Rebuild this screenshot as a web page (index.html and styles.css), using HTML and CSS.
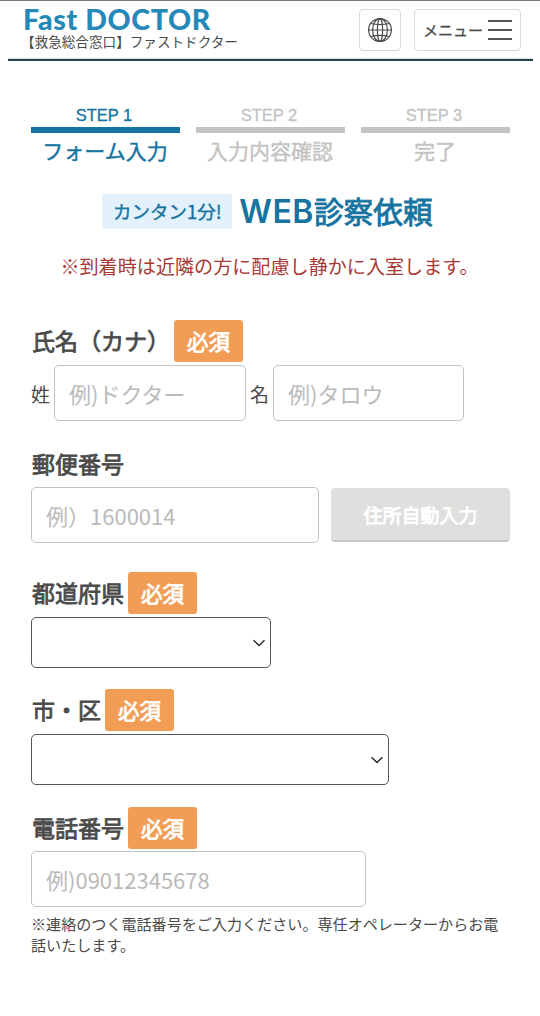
FILE: index.html
```
<!DOCTYPE html>
<html lang="ja">
<head>
    <meta charset="UTF-8">
    <title>WEB診察依頼 | ファストドクター</title>
    <link rel="stylesheet" href="styles.css">
</head>
<body>
    <header class="header">
        <div class="brand">
            <div class="logo">Fast DOCTOR</div>
            <div class="tagline">【救急総合窓口】ファストドクター</div>
        </div>
        <button class="lang-button" aria-label="Language">
            <svg width="26" height="26" viewBox="0 0 26 26" fill="none" stroke="#4a4a4a" stroke-width="1.2">
                <circle cx="13" cy="13" r="11.4"/>
                <ellipse cx="13" cy="13" rx="7.4" ry="11.4"/>
                <ellipse cx="13" cy="13" rx="2.6" ry="11.4"/>
                <path d="M1.7 13h22.6M4 6.5q9 2.2 18 0M4 19.5q9-2.2 18 0"/>
            </svg>
        </button>
        <button class="menu-button">
            <span>メニュー</span>
            <span class="menu-lines"><i></i><i></i><i></i></span>
        </button>
    </header>
    <div class="header-rule"></div>

    <main class="container">
        <ol class="steps">
            <li class="step active"><span class="step-no">STEP 1</span><span class="step-name">フォーム入力</span></li>
            <li class="step"><span class="step-no">STEP 2</span><span class="step-name">入力内容確認</span></li>
            <li class="step"><span class="step-no">STEP 3</span><span class="step-name">完了</span></li>
        </ol>

        <h1 class="title">
            <span class="title-badge">カンタン1分!</span>
            <span class="title-text"><span class="title-latin">WEB</span>診察依頼</span>
        </h1>
        <p class="notice">※到着時は近隣の方に配慮し静かに入室します。</p>

        <form>
            <div class="field name-field">
                <div class="label">氏名（カナ）<span class="required">必須</span></div>
                <div class="row">
                    <label class="name-label" for="sei">姓</label>
                    <input class="input name-input" id="sei" type="text" placeholder="例)ドクター">
                    <label class="name-label" for="mei">名</label>
                    <input class="input name-input" id="mei" type="text" placeholder="例)タロウ">
                </div>
            </div>

            <div class="field zip-field">
                <div class="label">郵便番号</div>
                <div class="row">
                    <input class="input zip-input" type="text" placeholder="例）1600014">
                    <button class="zip-button" type="button">住所自動入力</button>
                </div>
            </div>

            <div class="field pref-field">
                <div class="label">都道府県<span class="required">必須</span></div>
                <div class="select pref-select">
                    <svg width="14" height="8" viewBox="0 0 14 8" fill="none" stroke="#222" stroke-width="1.3"><path d="M1.5 1.2L7 6.5l5.5-5.3"/></svg>
                </div>
            </div>

            <div class="field city-field">
                <div class="label">市・区<span class="required">必須</span></div>
                <div class="select city-select">
                    <svg width="14" height="8" viewBox="0 0 14 8" fill="none" stroke="#222" stroke-width="1.3"><path d="M1.5 1.2L7 6.5l5.5-5.3"/></svg>
                </div>
            </div>

            <div class="field tel-field">
                <div class="label">電話番号<span class="required">必須</span></div>
                <input class="input tel-input" type="tel" placeholder="例)09012345678">
                <p class="help">※連絡のつく電話番号をご入力ください。専任オペレーターからお電話いたします。</p>
            </div>
        </form>
    </main>
</body>
</html>
```

FILE: styles.css
```
:root {
    --blue: #1674a1;
    --logo-blue: #2489b8;
    --gray: #c3c3c3;
    --text: #4a4a4a;
    --orange: #f29d55;
}

* {
    box-sizing: border-box;
}

body {
    margin: 0;
    background: #fff;
    color: var(--text);
    font-family: "Noto Sans CJK JP", sans-serif;
    overflow: hidden;
}

button, input {
    font-family: inherit;
    color: inherit;
    margin: 0;
    padding: 0;
}

/* header */
.header {
    display: flex;
    align-items: flex-start;
    height: 58px;
    padding: 8px 19px 0 23px;
    border-top: 1px solid #77777b;
}

.brand {
    flex: 1;
}

.logo {
    height: 21px;
    font-family: Lato, sans-serif;
    font-weight: 900;
    font-size: 28.5px;
    line-height: 21px;
    letter-spacing: 0.65px;
    color: var(--logo-blue);
    white-space: nowrap;
}

.tagline {
    margin-top: 1px;
    margin-left: -2px;
    font-size: 13.6px;
    line-height: 20px;
    white-space: nowrap;
}

.lang-button, .menu-button {
    display: flex;
    align-items: center;
    justify-content: center;
    height: 42px;
    background: #fff;
    border: 1px solid #d9d9d9;
    border-radius: 4px;
}

.lang-button {
    width: 42px;
    margin-right: 13px;
}

.menu-button {
    width: 107px;
    gap: 5px;
    padding-bottom: 1px;
    font-size: 15px;
    -webkit-text-stroke: 0.3px currentColor;
}

.menu-lines {
    display: flex;
    flex-direction: column;
    gap: 7px;
    width: 24px;
    padding-top: 1px;
}

.menu-lines i {
    height: 2px;
    background: #555;
}

.header-rule {
    height: 3px;
    margin: 0 7px 0 8px;
    border-top: 1px solid #cfe3e3;
    border-bottom: 2px solid #2b4148;
}

.container {
    padding: 43px 30px 0 31px;
}

/* steps */
.steps {
    display: grid;
    grid-template-columns: repeat(3, 1fr);
    gap: 16px;
    margin: 0;
    padding: 0;
    list-style: none;
    text-align: center;
    color: var(--gray);
}

.step.active {
    color: var(--blue);
}

.step-no {
    display: block;
    height: 29px;
    padding: 1px 3px 0 0;
    border-bottom: 6px solid currentColor;
    font-family: "Liberation Sans", sans-serif;
    font-size: 16.5px;
    line-height: 21px;
    -webkit-text-stroke: 0.3px currentColor;
}

.step-name {
    display: block;
    padding-right: 1px;
    font-size: 21px;
    line-height: 34px;
    -webkit-text-stroke: 0.4px currentColor;
}

/* title */
.title {
    display: flex;
    align-items: center;
    justify-content: center;
    gap: 7px;
    height: 36px;
    margin: 26px 0 0 -6px;
    color: var(--blue);
    font-weight: 400;
}

.title-badge {
    width: 130px;
    height: 35px;
    border-radius: 3px;
    background: #e2f1fb;
    text-align: center;
    font-size: 18.5px;
    line-height: 34px;
    -webkit-text-stroke: 0.4px currentColor;
}

.title-text {
    font-size: 29.7px;
    line-height: 34px;
    -webkit-text-stroke: 0.9px currentColor;
    white-space: nowrap;
}

.title-latin {
    font-family: Inter, sans-serif;
    font-weight: 600;
    font-size: 32px;
    letter-spacing: 0.5px;
    -webkit-text-stroke: 0;
}

.notice {
    margin: 21px 0 0 -2px;
    text-align: center;
    color: #a83a35;
    font-size: 19.1px;
    line-height: 32px;
    white-space: nowrap;
}

/* form */
.label {
    display: flex;
    align-items: center;
    gap: 4px;
    height: 42px;
    padding: 0 0 2px 1px;
    font-size: 23px;
    -webkit-text-stroke: 0.8px currentColor;
}

.required {
    width: 69px;
    height: 42px;
    margin-bottom: -2px;
    border-radius: 3px;
    background: var(--orange);
    color: #fff;
    text-align: center;
    font-size: 21.5px;
    line-height: 42px;
}

.row {
    display: flex;
    align-items: center;
}

.input {
    display: block;
    height: 56px;
    padding: 0 14px 1px;
    border: 1px solid #c2c2c2;
    border-radius: 5px;
    background: #fff;
    font-size: 22px;
    outline: none;
}

.input::placeholder {
    color: #bababa;
    opacity: 1;
}

.name-field {
    margin-top: 38px;
}

.name-field .row {
    margin-top: 3px;
}

.name-label {
    font-size: 19px;
}

.name-input {
    width: 192px;
    margin: 0 4px;
}

.name-input:last-child {
    width: 191px;
}

.zip-field {
    margin-top: 22px;
}

.zip-field .row {
    margin-top: 2px;
    gap: 12px;
}

.zip-input {
    width: 288px;
}

.zip-button {
    width: 179px;
    height: 54px;
    border: 0;
    border-bottom: 2px solid #c9c7c7;
    border-radius: 4px;
    background: #e0dfde;
    color: #fff;
    font-size: 19px;
    -webkit-text-stroke: 0.8px currentColor;
}

.pref-field {
    margin-top: 29px;
}

.select {
    display: flex;
    align-items: center;
    justify-content: flex-end;
    height: 51px;
    margin-top: 3px;
    padding-right: 4px;
    border: 1px solid #555;
    border-radius: 5px;
    background: #fff;
}

.pref-select {
    width: 240px;
}

.city-select {
    width: 358px;
}

.city-field {
    margin-top: 21px;
}

.tel-field {
    margin-top: 22px;
}

.tel-input {
    width: 335px;
    margin-top: 2px;
}

.help {
    margin: 6px 0 0;
    font-size: 15.08px;
    line-height: 21px;
}
```
